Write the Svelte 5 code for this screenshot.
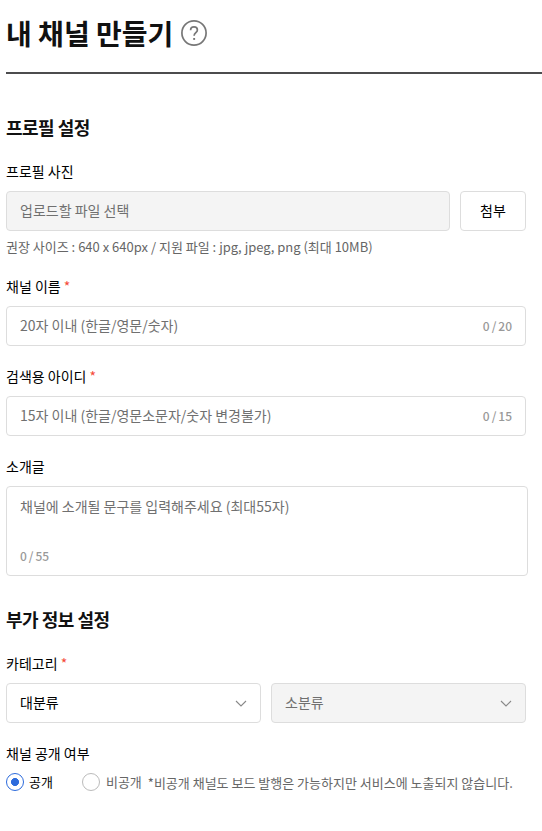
<script>
	let name = "";
	let searchId = "";
	let intro = "";
	let open = "public";
</script>

<main>
	<header>
		<h1>내 채널 만들기</h1>
		<svg class="help" viewBox="0 0 26 26">
			<circle cx="13" cy="13" r="12.1" />
			<path d="M9.6 10.2c0-2.1 1.4-3.3 3.4-3.3s3.4 1.2 3.4 3.1c0 2.6-3.3 2.8-3.3 5.8" />
			<path class="dot" d="M12.2 18h1.9v1.9h-1.9z" />
		</svg>
	</header>

	<section>
		<h2>프로필 설정</h2>
		<div class="field">
			<label for="photo">프로필 사진</label>
			<div class="row">
				<input id="photo" class="box" placeholder="업로드할 파일 선택" disabled />
				<button class="box">첨부</button>
			</div>
			<p class="hint">권장 사이즈 : 640 x 640px / 지원 파일 : jpg, jpeg, png (최대 10MB)</p>
		</div>
		<div class="field">
			<label for="name">채널 이름 <em>*</em></label>
			<div class="box counted">
				<input id="name" bind:value={name} maxlength="20" placeholder="20자 이내 (한글/영문/숫자)" />
				<span class="count">{name.length} / 20</span>
			</div>
		</div>
		<div class="field">
			<label for="searchId">검색용 아이디 <em>*</em></label>
			<div class="box counted">
				<input id="searchId" bind:value={searchId} maxlength="15" placeholder="15자 이내 (한글/영문소문자/숫자 변경불가)" />
				<span class="count">{searchId.length} / 15</span>
			</div>
		</div>
		<div class="field">
			<label for="intro">소개글</label>
			<div class="box intro">
				<textarea id="intro" bind:value={intro} maxlength="55" placeholder="채널에 소개될 문구를 입력해주세요 (최대55자)"></textarea>
				<span class="count">{intro.length} / 55</span>
			</div>
		</div>
	</section>

	<section class="extra">
		<h2>부가 정보 설정</h2>
		<div class="field">
			<label for="category">카테고리 <em>*</em></label>
			<div class="row">
				<button id="category" class="box select">
					대분류
					<svg viewBox="0 0 12 8"><path d="M1 1l5 5 5-5" /></svg>
				</button>
				<button class="box select" disabled>
					소분류
					<svg viewBox="0 0 12 8"><path d="M1 1l5 5 5-5" /></svg>
				</button>
			</div>
		</div>
		<div class="field">
			<div class="label">채널 공개 여부</div>
			<div class="radios">
				<label class="radio">
					<input type="radio" bind:group={open} value="public" />
					<span>공개</span>
				</label>
				<label class="radio">
					<input type="radio" bind:group={open} value="private" />
					<span>비공개</span>
				</label>
				<p class="note">*비공개 채널도 보드 발행은 가능하지만 서비스에 노출되지 않습니다.</p>
			</div>
		</div>
	</section>
</main>

<style>
	:global(body) {
		background: #fff;
	}
	main,
	input,
	button,
	textarea {
		font-family: "Noto Sans CJK KR", "Noto Sans", sans-serif;
		font-size: 14px;
		color: #000;
	}
	main {
		padding-left: 6px;
		height: 831px;
		overflow: hidden;
		box-sizing: border-box;
		line-height: 20px;
	}
	main * {
		box-sizing: border-box;
	}
	h1,
	h2,
	p {
		margin: 0;
	}
	header {
		display: flex;
		align-items: center;
		gap: 8px;
		height: 74px;
		padding-bottom: 6px;
		border-bottom: 2px solid #4c4c4e;
	}
	h1 {
		height: 40px;
		font-size: 28px;
		line-height: 40px;
		font-weight: 700;
		color: #111;
	}
	.help {
		width: 26px;
		height: 26px;
		fill: none;
		stroke: #777;
		stroke-width: 1.7;
	}
	.help .dot {
		fill: #777;
		stroke: none;
	}
	section {
		width: 520px;
		padding-top: 41px;
	}
	.extra {
		padding-top: 31px;
	}
	h2 {
		height: 26px;
		font-size: 18px;
		line-height: 25px;
		font-weight: 700;
		letter-spacing: -0.5px;
		color: #111;
	}
	.field {
		margin-top: 21px;
	}
	.field > label,
	.label {
		display: block;
		height: 20px;
		line-height: 18px;
		margin-bottom: 9px;
	}
	em {
		font-style: normal;
		color: #f54a38;
	}
	.row {
		display: flex;
		gap: 10px;
	}
	.box {
		height: 40px;
		border: 1px solid #ddd;
		border-radius: 4px;
		background: #fff;
	}
	input.box {
		flex: 1;
		padding: 0 13px 2px;
	}
	.box:disabled {
		background: #f4f4f4;
		color: #707070;
	}
	input::placeholder,
	textarea::placeholder {
		color: #707070;
	}
	button.box {
		width: 66px;
		padding: 0 0 2px;
	}
	.hint {
		height: 19px;
		margin-top: 6px;
		font-size: 13px;
		color: #666;
	}
	.counted {
		display: flex;
		align-items: center;
		padding: 0 13px;
	}
	.counted input {
		flex: 1;
		border: 0;
		padding: 0 0 2px;
		outline: none;
	}
	.count {
		font-size: 12px;
		font-weight: 500;
		word-spacing: -0.7px;
		color: #999;
	}
	.intro {
		display: flex;
		flex-direction: column;
		width: 522px;
		height: 90px;
		padding: 9px 13px;
	}
	.intro textarea {
		flex: 1;
		border: 0;
		padding: 0;
		outline: none;
		resize: none;
		line-height: 20px;
	}
	button.select {
		display: flex;
		align-items: center;
		justify-content: space-between;
		width: 255px;
		padding: 0 13px 2px;
	}
	.select svg {
		width: 12px;
		height: 8px;
		margin-top: 4px;
		fill: none;
		stroke: #888;
		stroke-width: 1.1;
	}
	.radios {
		display: flex;
		align-items: center;
		height: 18px;
		font-size: 13px;
		white-space: nowrap;
	}
	.radio {
		display: flex;
		align-items: center;
		gap: 5px;
		margin-right: 29px;
	}
	.radio input {
		appearance: none;
		width: 18px;
		height: 18px;
		margin: 0;
		border: 1px solid #bbb;
		border-radius: 50%;
	}
	.radio input:checked {
		border-color: #2d6bdc;
		background: radial-gradient(circle, #2d6bdc 3.7px, transparent 4.3px);
	}
	.radio + .radio {
		gap: 6px;
		margin-right: 6px;
		color: #666;
	}
	.note {
		padding-top: 1px;
		font-size: 13px;
		color: #666;
	}
</style>
